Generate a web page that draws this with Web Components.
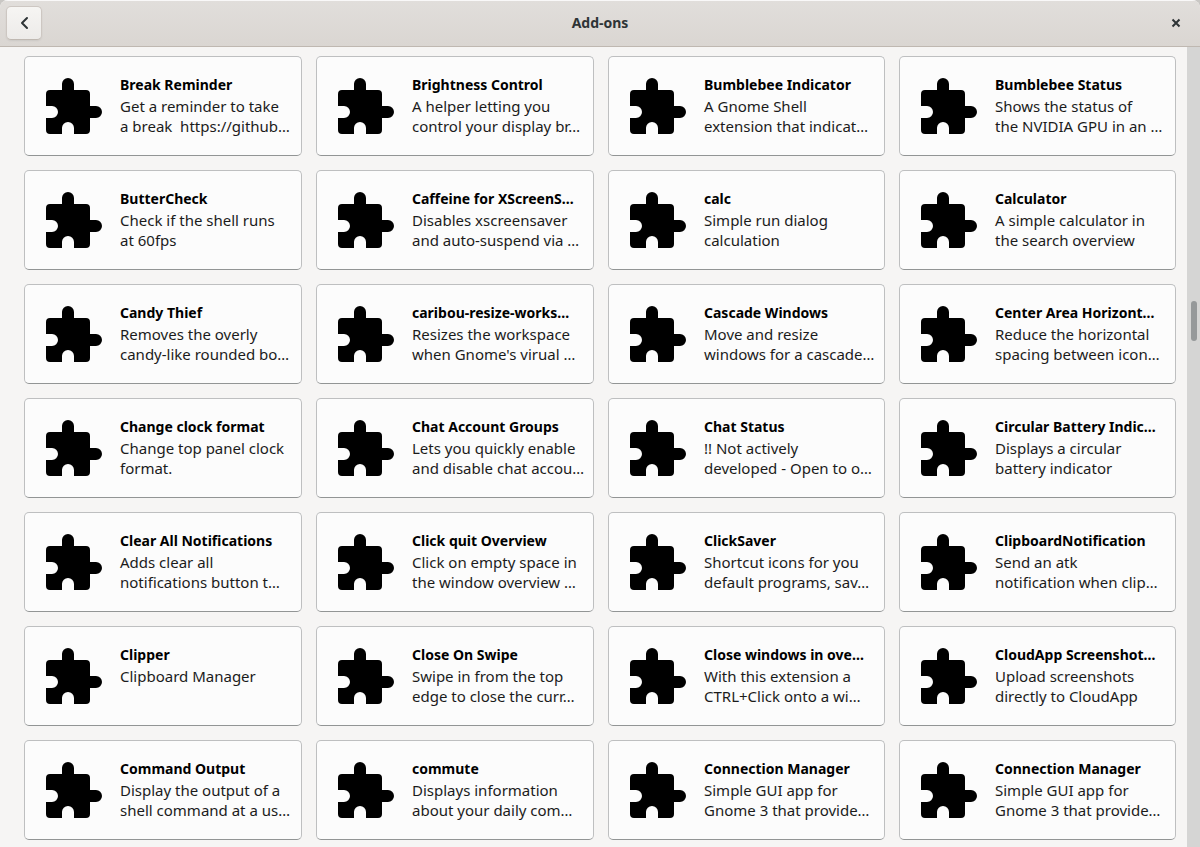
<!DOCTYPE html>
<html lang="en">
<head>
<meta charset="utf-8">
<title>Add-ons</title>
<style>
html, body { margin: 0; height: 100%; }
body { background: #c9c7c4; font-family: "Noto Sans", sans-serif; color: #000; overflow: hidden; }
</style>
</head>
<body>
<addons-window></addons-window>

<template id="window-template">
<style>
:host { display: flex; flex-direction: column; height: 100%; background: #f6f5f4; border-radius: 8px 8px 0 0; overflow: hidden; }
.body { display: flex; flex: 1; min-height: 0; }
main { flex: 1; min-width: 0; overflow: hidden; box-sizing: border-box; padding: 9px 11px 8px 24px; }
.grid { display: grid; grid-template-columns: minmax(0, 278fr) minmax(0, 278fr) minmax(0, 277fr) minmax(0, 277fr); grid-auto-rows: 100px; gap: 14px; }
</style>
<header-bar>Add-ons</header-bar>
<div class="body">
<main><div class="grid"></div></main>
<scroll-track></scroll-track>
</div>
</template>

<template id="header-template">
<style>
:host { display: block; flex: none; }
header { display: grid; grid-template-columns: 1fr auto 1fr; align-items: center; height: 47px; box-sizing: border-box; padding: 0 6px; background: linear-gradient(#e1dedb, #dad6d2); border-bottom: 1px solid #bfb8b1; box-shadow: inset 0 1px #f9f8f8; color: #2e3436; }
h1 { margin: 0; font-size: 14px; line-height: 20px; font-weight: 700; }
button { font: inherit; color: inherit; display: flex; align-items: center; justify-content: center; margin: 0; padding: 0; box-sizing: border-box; }
.back { width: 36px; height: 34px; border: 1px solid #cdc7c2; border-bottom-color: #bfb8b1; border-radius: 5px; background: linear-gradient(#f6f5f3, #edebe9); box-shadow: 0 1px 2px rgba(0,0,0,.07); }
.close { justify-self: end; width: 36px; height: 34px; border: 0; background: none; }
svg { display: block; fill: none; stroke: currentColor; }
</style>
<header>
<button class="back" aria-label="Back"><svg width="16" height="16" viewBox="0 0 16 16" stroke-width="2" stroke-linecap="round" stroke-linejoin="round"><path d="M11 3 6 8l5 5"/></svg></button>
<h1><slot></slot></h1>
<button class="close" aria-label="Close"><svg width="16" height="16" viewBox="0 0 16 16" stroke-width="2"><path d="m4.500 4.500 7 7m0-7-7 7"/></svg></button>
</header>
</template>

<template id="card-template">
<style>
:host { display: block; min-width: 0; }
button { display: flex; align-items: flex-start; width: 100%; height: 100%; box-sizing: border-box; margin: 0; padding: 18px 12px 0 21px; border: 1px solid #bebfc0; border-bottom-color: #929595; border-radius: 5px; background: #fcfcfc; font: inherit; font-size: 15px; line-height: 20px; color: #000; text-align: left; }
svg { flex: none; width: 56px; height: 56px; margin: 3px 18px 0 0; fill: #000; }
.text { min-width: 0; white-space: pre; }
.name { display: block; font-size: 14px; font-weight: 700; margin-bottom: 1px; }
.summary { display: block; color: #1b1b1b; }
</style>
<button>
<svg viewBox="0 0 56 56" aria-hidden="true"><path d="M4 12h12V6a6 6 0 0 1 12 0v6h12a4 4 0 0 1 4 4v12h6a6 6 0 0 1 0 12h-6v12a4 4 0 0 1-4 4H28v-6a6 6 0 0 0-12 0v6H4a4 4 0 0 1-4-4V40h6a6 6 0 0 0 0-12H0V16a4 4 0 0 1 4-4z"/></svg>
<span class="text"><span class="name"><slot name="name"></slot></span><span class="summary"><slot></slot></span></span>
</button>
</template>

<template id="scroll-template">
<style>
:host { display: grid; grid-template-rows: 254fr 40px 506fr; justify-items: center; flex: none; width: 13px; box-sizing: border-box; padding-left: 1px; background: #d5d5d4; }
.thumb { grid-row: 2; width: 6px; border-radius: 3px; background: #96999a; }
</style>
<div class="thumb"></div>
</template>

<script>
const addons = [
["Break Reminder", "Get a reminder to take\na break  https://github…"],
["Brightness Control", "A helper letting you\ncontrol your display br…"],
["Bumblebee Indicator", "A Gnome Shell\nextension that indicat…"],
["Bumblebee Status", "Shows the status of\nthe NVIDIA GPU in an …"],
["ButterCheck", "Check if the shell runs\nat 60fps"],
["Caffeine for XScreenS…", "Disables xscreensaver\nand auto-suspend via …"],
["calc", "Simple run dialog\ncalculation"],
["Calculator", "A simple calculator in\nthe search overview"],
["Candy Thief", "Removes the overly\ncandy-like rounded bo…"],
["caribou-resize-works…", "Resizes the workspace\nwhen Gnome's virual …"],
["Cascade Windows", "Move and resize\nwindows for a cascade…"],
["Center Area Horizont…", "Reduce the horizontal\nspacing between icon…"],
["Change clock format", "Change top panel clock\nformat."],
["Chat Account Groups", "Lets you quickly enable\nand disable chat accou…"],
["Chat Status", "!! Not actively\ndeveloped - Open to o…"],
["Circular Battery Indic…", "Displays a circular\nbattery indicator"],
["Clear All Notifications", "Adds clear all\nnotifications button t…"],
["Click quit Overview", "Click on empty space in\nthe window overview …"],
["ClickSaver", "Shortcut icons for you\ndefault programs, sav…"],
["ClipboardNotification", "Send an atk\nnotification when clip…"],
["Clipper", "Clipboard Manager"],
["Close On Swipe", "Swipe in from the top\nedge to close the curr…"],
["Close windows in ove…", "With this extension a\nCTRL+Click onto a wi…"],
["CloudApp Screenshot…", "Upload screenshots\ndirectly to CloudApp"],
["Command Output", "Display the output of a\nshell command at a us…"],
["commute", "Displays information\nabout your daily com…"],
["Connection Manager", "Simple GUI app for\nGnome 3 that provide…"],
["Connection Manager", "Simple GUI app for\nGnome 3 that provide…"]
];

class TemplateElement extends HTMLElement {
  constructor() {
    super();
    const template = document.getElementById(this.constructor.template);
    this.attachShadow({ mode: "open" }).append(template.content.cloneNode(true));
  }
}
class HeaderBar extends TemplateElement { static template = "header-template"; }
class AddonCard extends TemplateElement { static template = "card-template"; }
class ScrollTrack extends TemplateElement { static template = "scroll-template"; }
class AddonsWindow extends TemplateElement {
  static template = "window-template";
  connectedCallback() {
    const grid = this.shadowRoot.querySelector(".grid");
    for (const [name, summary] of addons) {
      const card = document.createElement("addon-card");
      const title = document.createElement("span");
      title.slot = "name";
      title.textContent = name;
      const text = document.createElement("span");
      text.textContent = summary;
      card.append(title, text);
      grid.append(card);
    }
  }
}
customElements.define("header-bar", HeaderBar);
customElements.define("addon-card", AddonCard);
customElements.define("scroll-track", ScrollTrack);
customElements.define("addons-window", AddonsWindow);
</script>
</body>
</html>
